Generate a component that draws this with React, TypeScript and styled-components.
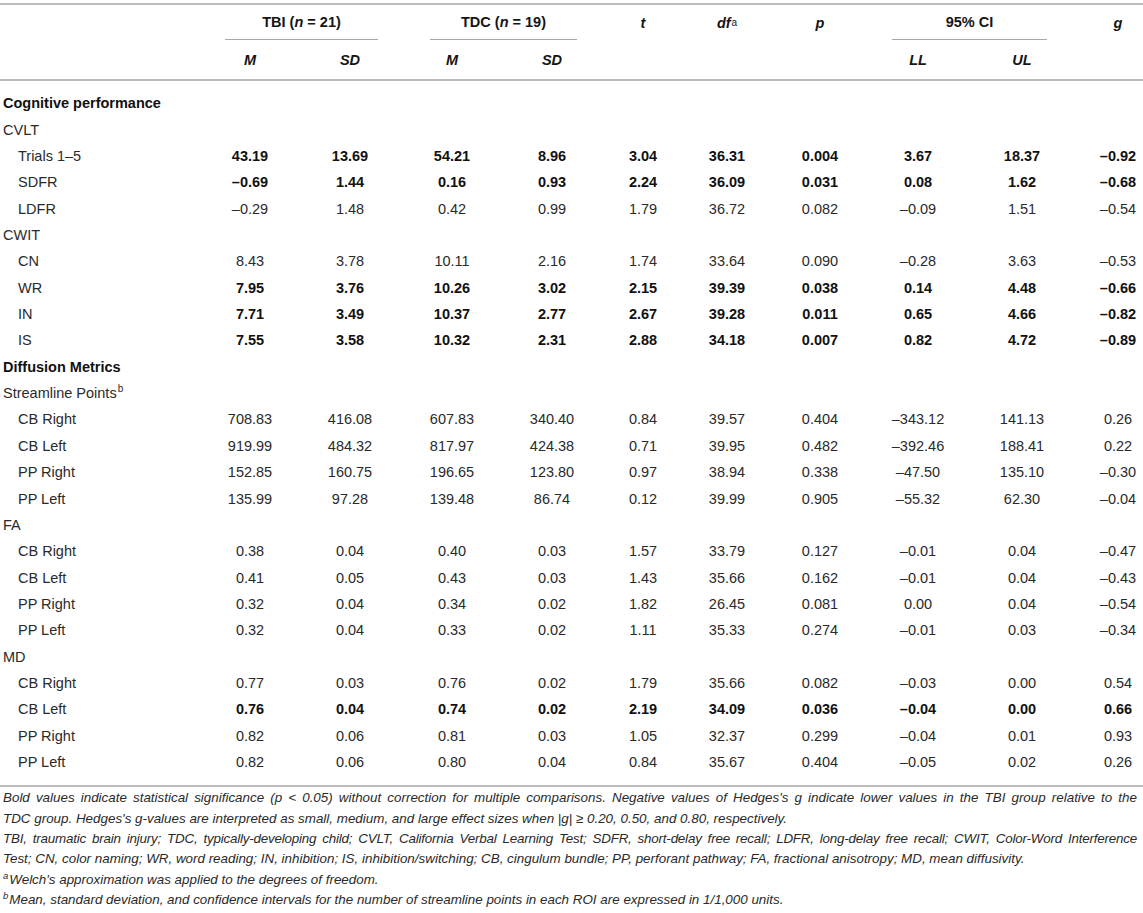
import React from "react";
import styled, { createGlobalStyle } from "styled-components";

const GlobalStyle = createGlobalStyle`
  html, body { margin: 0; padding: 0; background: #ffffff; }
  body { font-family: "Liberation Sans", Arial, Helvetica, sans-serif; color: #1f1f1f; }
`;

const COLS = "200px 100px 100px 104px 96px 86px 82px 104px 92px 116px 63px";

const Page = styled.div`
  width: 1143px;
  padding-top: 3px;
`;

const Table = styled.div`
  border-top: 2px solid #bcbcbc;
  border-bottom: 2px solid #bcbcbc;
`;

const Head = styled.div`
  border-bottom: 2px solid #bcbcbc;
`;

const HeadRow = styled.div<{ $h: number }>`
  display: grid;
  grid-template-columns: ${COLS};
  height: ${(p) => p.$h}px;
  font-size: 14.5px;
  font-weight: 700;
  color: #151515;
`;

const HeadCell = styled.div<{ $last?: boolean }>`
  display: flex;
  align-items: center;
  justify-content: center;
  padding-left: ${(p) => (p.$last ? 13 : 0)}px;
  font-style: italic;
`;

const GroupHead = styled.div<{ $ml: number; $mr: number }>`
  grid-column: span 2;
  display: flex;
  align-items: center;
  justify-content: center;
  margin: 0 ${(p) => p.$mr}px 0 ${(p) => p.$ml}px;
  border-bottom: 1px solid #a8a8a8;
  font-style: normal;
  i { font-style: italic; }
`;

const Sup = styled.sup`
  font-size: 10px;
  font-weight: 400;
  font-style: normal;
  vertical-align: 6px;
  line-height: 0;
  margin-left: 1px;
`;

const Body = styled.div`
  padding: 9px 0 10px;
`;

const Row = styled.div`
  display: grid;
  grid-template-columns: ${COLS};
  height: 26.36px;
  align-items: center;
  font-size: 14.5px;
`;

const Label = styled.div<{ $indent?: boolean; $bold?: boolean }>`
  padding-left: ${(p) => (p.$indent ? 18 : 3)}px;
  font-weight: ${(p) => (p.$bold ? 700 : 400)};
  color: ${(p) => (p.$bold ? "#111" : "#2a2a2a")};
  white-space: nowrap;
`;

const Num = styled.div<{ $bold?: boolean; $last?: boolean }>`
  text-align: center;
  padding-left: ${(p) => (p.$last ? 13 : 0)}px;
  font-weight: ${(p) => (p.$bold ? 700 : 400)};
  color: ${(p) => (p.$bold ? "#111" : "#2a2a2a")};
`;

const Notes = styled.div`
  width: 1134px;
  font-size: 13.4px;
  font-style: italic;
  line-height: 20.3px;
  color: #2a2a2a;
  padding-left: 3px;
  padding-top: 1px;
`;

const NoteLine = styled.div<{ $full?: boolean; $tight?: boolean }>`
  white-space: ${(p) => (p.$full ? "normal" : "nowrap")};
  text-align: ${(p) => (p.$full ? "justify" : "left")};
  text-align-last: ${(p) => (p.$full ? "justify" : "auto")};
  letter-spacing: ${(p) => (p.$tight ? "-0.2px" : "0")};
  word-spacing: ${(p) => (p.$tight ? "-0.6px" : "0")};
`;

const NoteSup = styled.sup`
  font-size: 9.5px;
  vertical-align: 5px;
  line-height: 0;
  margin-right: 1px;
`;

type DataRow =
  | { kind: "section"; label: string }
  | { kind: "group"; label: string; sup?: string }
  | { kind: "data"; label: string; values: string[]; bold?: boolean };

const rows: DataRow[] = [
  { kind: "section", label: "Cognitive performance" },
  { kind: "group", label: "CVLT" },
  { kind: "data", label: "Trials 1–5", bold: true, values: ["43.19", "13.69", "54.21", "8.96", "3.04", "36.31", "0.004", "3.67", "18.37", "–0.92"] },
  { kind: "data", label: "SDFR", bold: true, values: ["–0.69", "1.44", "0.16", "0.93", "2.24", "36.09", "0.031", "0.08", "1.62", "–0.68"] },
  { kind: "data", label: "LDFR", values: ["–0.29", "1.48", "0.42", "0.99", "1.79", "36.72", "0.082", "–0.09", "1.51", "–0.54"] },
  { kind: "group", label: "CWIT" },
  { kind: "data", label: "CN", values: ["8.43", "3.78", "10.11", "2.16", "1.74", "33.64", "0.090", "–0.28", "3.63", "–0.53"] },
  { kind: "data", label: "WR", bold: true, values: ["7.95", "3.76", "10.26", "3.02", "2.15", "39.39", "0.038", "0.14", "4.48", "–0.66"] },
  { kind: "data", label: "IN", bold: true, values: ["7.71", "3.49", "10.37", "2.77", "2.67", "39.28", "0.011", "0.65", "4.66", "–0.82"] },
  { kind: "data", label: "IS", bold: true, values: ["7.55", "3.58", "10.32", "2.31", "2.88", "34.18", "0.007", "0.82", "4.72", "–0.89"] },
  { kind: "section", label: "Diffusion Metrics" },
  { kind: "group", label: "Streamline Points", sup: "b" },
  { kind: "data", label: "CB Right", values: ["708.83", "416.08", "607.83", "340.40", "0.84", "39.57", "0.404", "–343.12", "141.13", "0.26"] },
  { kind: "data", label: "CB Left", values: ["919.99", "484.32", "817.97", "424.38", "0.71", "39.95", "0.482", "–392.46", "188.41", "0.22"] },
  { kind: "data", label: "PP Right", values: ["152.85", "160.75", "196.65", "123.80", "0.97", "38.94", "0.338", "–47.50", "135.10", "–0.30"] },
  { kind: "data", label: "PP Left", values: ["135.99", "97.28", "139.48", "86.74", "0.12", "39.99", "0.905", "–55.32", "62.30", "–0.04"] },
  { kind: "group", label: "FA" },
  { kind: "data", label: "CB Right", values: ["0.38", "0.04", "0.40", "0.03", "1.57", "33.79", "0.127", "–0.01", "0.04", "–0.47"] },
  { kind: "data", label: "CB Left", values: ["0.41", "0.05", "0.43", "0.03", "1.43", "35.66", "0.162", "–0.01", "0.04", "–0.43"] },
  { kind: "data", label: "PP Right", values: ["0.32", "0.04", "0.34", "0.02", "1.82", "26.45", "0.081", "0.00", "0.04", "–0.54"] },
  { kind: "data", label: "PP Left", values: ["0.32", "0.04", "0.33", "0.02", "1.11", "35.33", "0.274", "–0.01", "0.03", "–0.34"] },
  { kind: "group", label: "MD" },
  { kind: "data", label: "CB Right", values: ["0.77", "0.03", "0.76", "0.02", "1.79", "35.66", "0.082", "–0.03", "0.00", "0.54"] },
  { kind: "data", label: "CB Left", bold: true, values: ["0.76", "0.04", "0.74", "0.02", "2.19", "34.09", "0.036", "–0.04", "0.00", "0.66"] },
  { kind: "data", label: "PP Right", values: ["0.82", "0.06", "0.81", "0.03", "1.05", "32.37", "0.299", "–0.04", "0.01", "0.93"] },
  { kind: "data", label: "PP Left", values: ["0.82", "0.06", "0.80", "0.04", "0.84", "35.67", "0.404", "–0.05", "0.02", "0.26"] },
];

export default function App() {
  return (
    <Page>
      <GlobalStyle />
      <Table>
        <Head>
          <HeadRow $h={35}>
            <div />
            <GroupHead $ml={25} $mr={22}>
              TBI (<i>n</i>&nbsp;= 21)
            </GroupHead>
            <GroupHead $ml={30} $mr={23}>
              TDC (<i>n</i>&nbsp;= 19)
            </GroupHead>
            <HeadCell>t</HeadCell>
            <HeadCell>
              df<Sup>a</Sup>
            </HeadCell>
            <HeadCell>p</HeadCell>
            <GroupHead $ml={20} $mr={33}>
              95% CI
            </GroupHead>
            <HeadCell $last>g</HeadCell>
          </HeadRow>
          <HeadRow $h={39}>
            <div />
            <HeadCell>M</HeadCell>
            <HeadCell>SD</HeadCell>
            <HeadCell>M</HeadCell>
            <HeadCell>SD</HeadCell>
            <div />
            <div />
            <div />
            <HeadCell>LL</HeadCell>
            <HeadCell>UL</HeadCell>
            <div />
          </HeadRow>
        </Head>
        <Body>
          {rows.map((r, i) => {
            if (r.kind === "section") {
              return (
                <Row key={i}>
                  <Label $bold>{r.label}</Label>
                </Row>
              );
            }
            if (r.kind === "group") {
              return (
                <Row key={i}>
                  <Label>
                    {r.label}
                    {r.sup && <Sup>{r.sup}</Sup>}
                  </Label>
                </Row>
              );
            }
            return (
              <Row key={i}>
                <Label $indent>{r.label}</Label>
                {r.values.map((v, j) => (
                  <Num key={j} $bold={r.bold} $last={j === r.values.length - 1}>
                    {v}
                  </Num>
                ))}
              </Row>
            );
          })}
        </Body>
      </Table>
      <Notes>
        <NoteLine $full>
          Bold values indicate statistical significance (p &lt; 0.05) without correction for multiple comparisons. Negative values of Hedges's g indicate lower values in the TBI group relative to the
        </NoteLine>
        <NoteLine>
          TDC group. Hedges's g-values are interpreted as small, medium, and large effect sizes when |g| ≥ 0.20, 0.50, and 0.80, respectively.
        </NoteLine>
        <NoteLine $full $tight>
          TBI, traumatic brain injury; TDC, typically-developing child; CVLT, California Verbal Learning Test; SDFR, short-delay free recall; LDFR, long-delay free recall; CWIT, Color-Word Interference
        </NoteLine>
        <NoteLine>
          Test; CN, color naming; WR, word reading; IN, inhibition; IS, inhibition/switching; CB, cingulum bundle; PP, perforant pathway; FA, fractional anisotropy; MD, mean diffusivity.
        </NoteLine>
        <NoteLine>
          <NoteSup>a</NoteSup>Welch's approximation was applied to the degrees of freedom.
        </NoteLine>
        <NoteLine>
          <NoteSup>b</NoteSup>Mean, standard deviation, and confidence intervals for the number of streamline points in each ROI are expressed in 1/1,000 units.
        </NoteLine>
      </Notes>
    </Page>
  );
}
